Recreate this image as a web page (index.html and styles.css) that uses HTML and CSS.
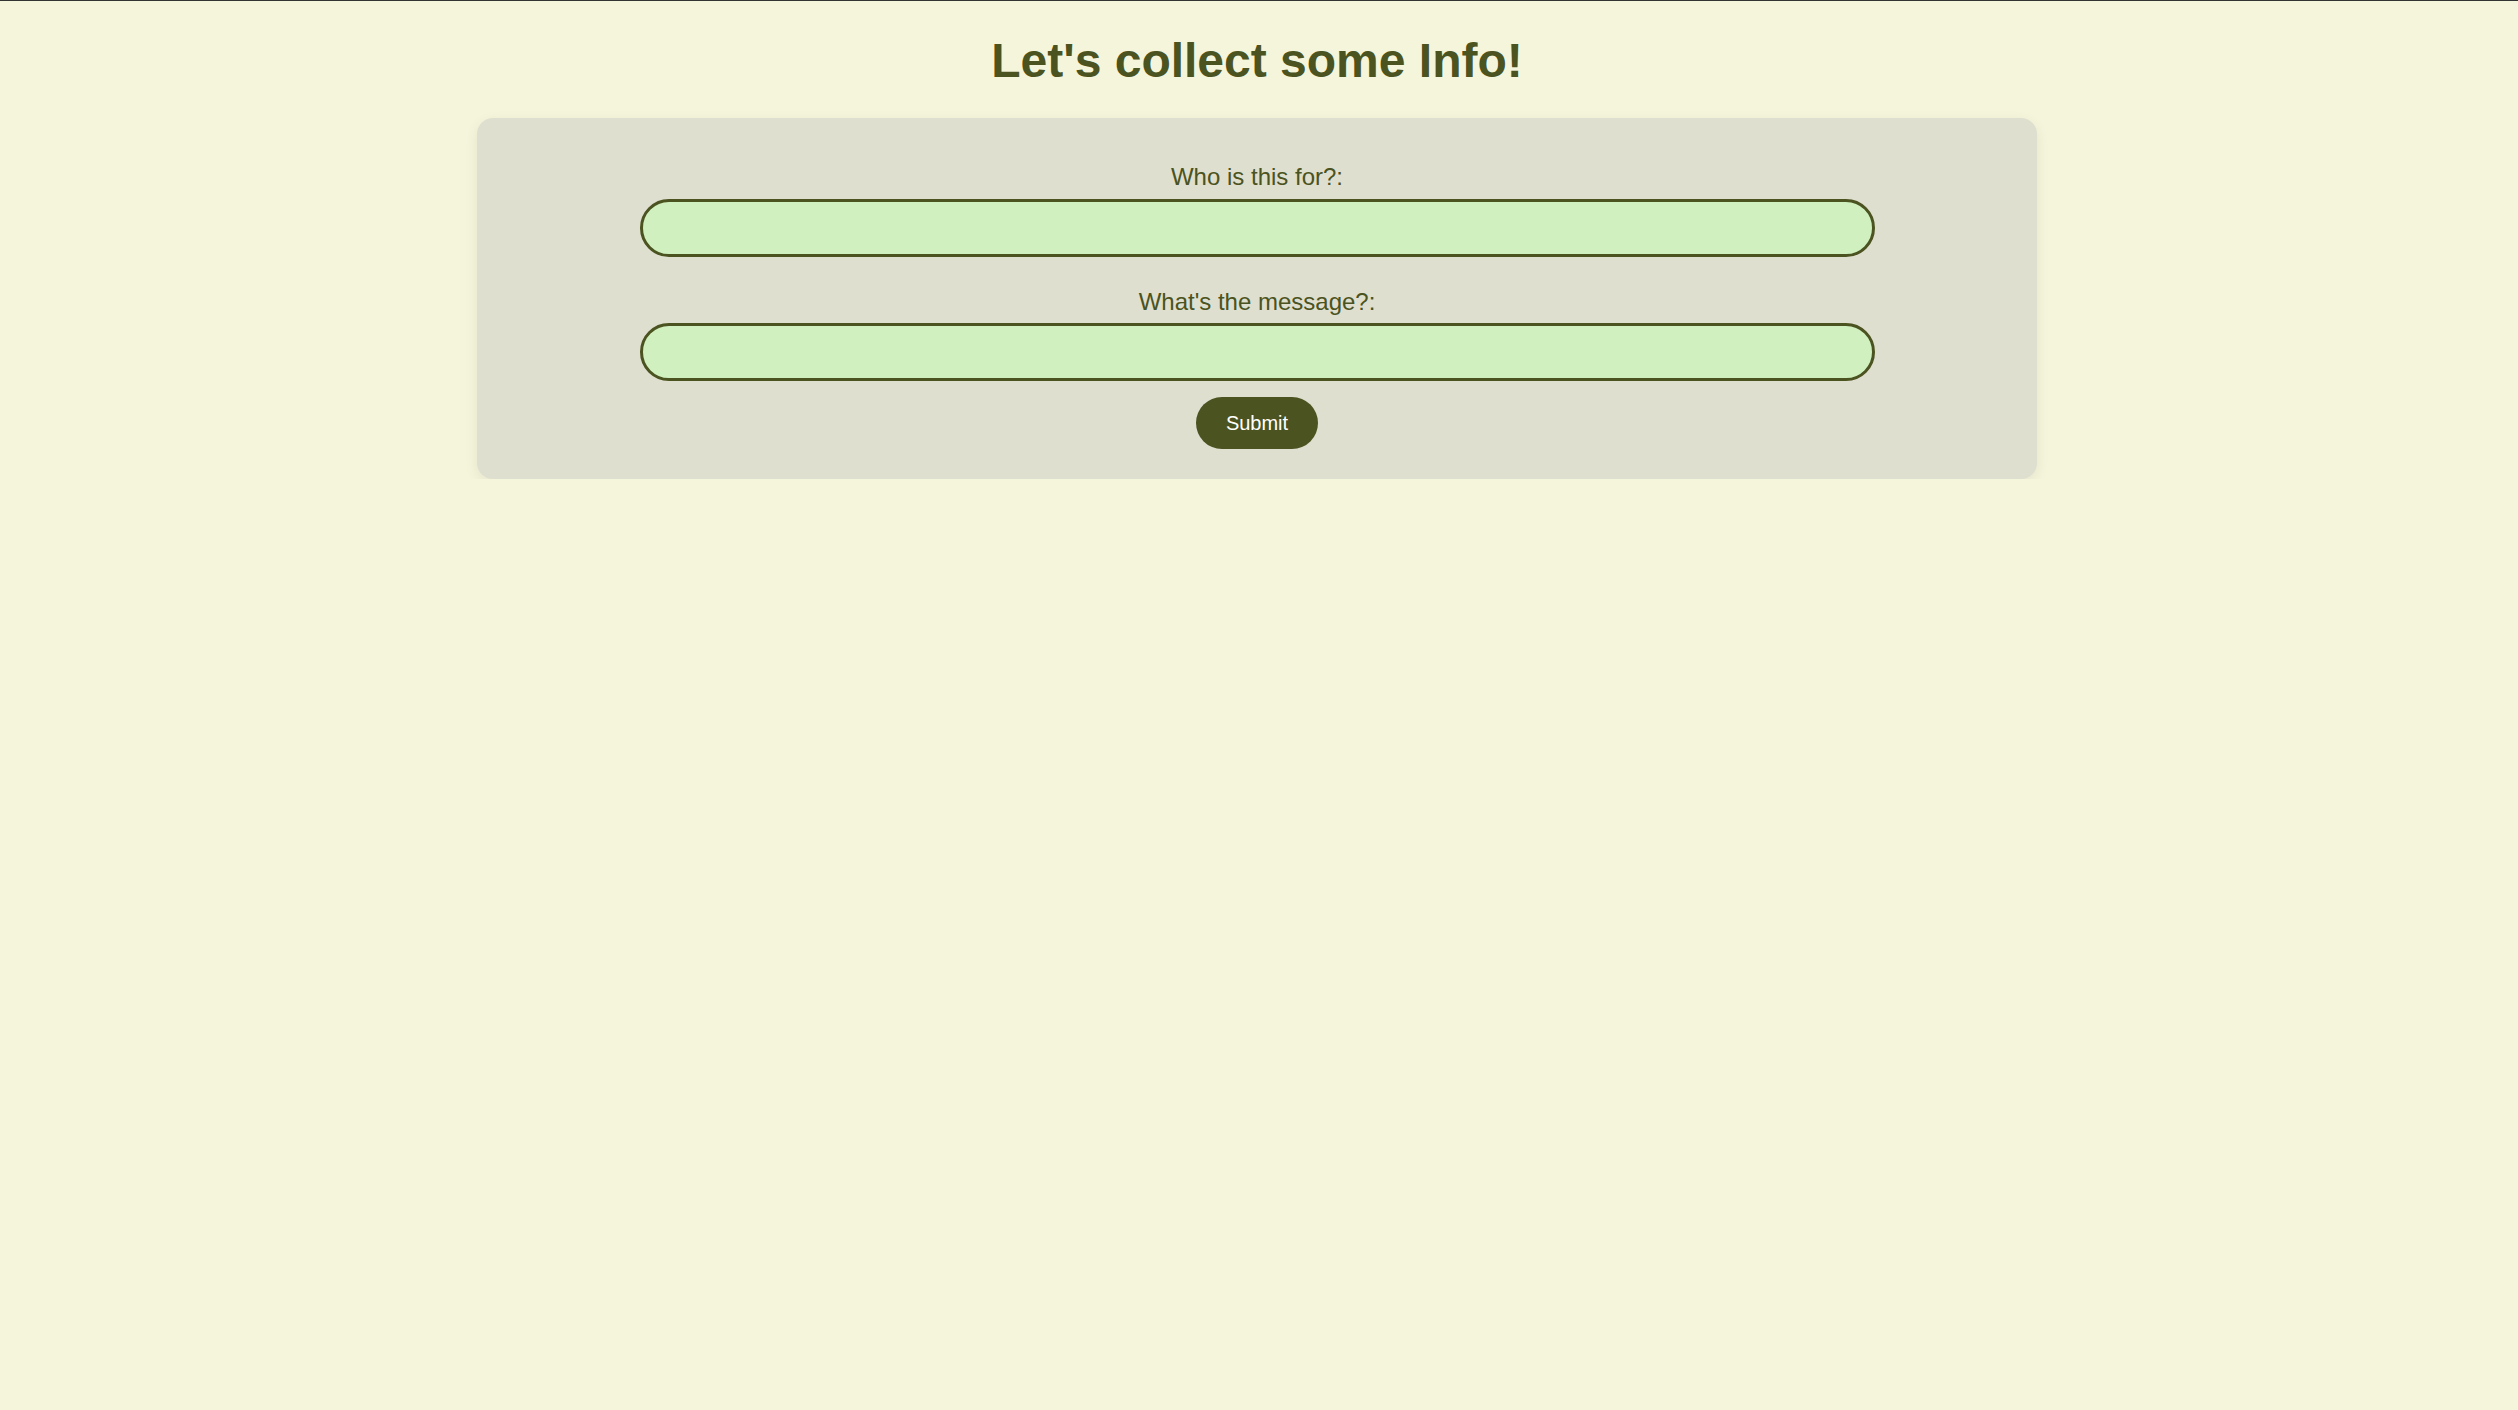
FILE: index.html
```html
<!DOCTYPE html>
<html lang="en">
<head>
<meta charset="utf-8">
<title>Let's collect some Info!</title>
<link rel="stylesheet" href="styles.css">
</head>
<body>
<h1 class="title">Let's collect some Info!</h1>
<form class="card">
  <label class="field-label" for="who">Who is this for?:</label>
  <input class="field-input" id="who" type="text">
  <label class="field-label second" for="msg">What's the message?:</label>
  <input class="field-input" id="msg" type="text">
  <button class="submit" type="button">Submit</button>
</form>
</body>
</html>
```

FILE: styles.css
```css
html {
  border-top: 1px solid #333333;
  background: #f5f5dc;
}
body {
  margin: 0;
  padding-right: 4px;
  background: #f5f5dc;
  font-family: "Liberation Sans", Arial, sans-serif;
  color: #4b5320;
}
.title {
  font-family: "Liberation Sans", Arial, sans-serif;
  font-weight: bold;
  font-size: 48px;
  line-height: 55px;
  text-align: center;
  margin: 32px 0 30px;
  color: #4b5320;
}
.card {
  width: 1560px;
  box-sizing: border-box;
  margin: 0 auto;
  background: #dfdfd0;
  border-radius: 16px;
  box-shadow: 0 4px 14px rgba(0, 0, 0, 0.07);
  padding: 45px 0 30px;
  display: flex;
  flex-direction: column;
  align-items: center;
}
.field-label {
  font-size: 24px;
  line-height: 28px;
  margin-bottom: 8px;
}
.field-label.second {
  margin-top: 31px;
  margin-bottom: 7px;
}
.field-input {
  width: 1235px;
  height: 58px;
  box-sizing: border-box;
  border: 3px solid #4b5320;
  border-radius: 29px;
  background: #d0f0c0;
  padding: 0 20px;
  font-size: 20px;
  font-family: "Liberation Sans", Arial, sans-serif;
  outline: none;
}
.submit {
  margin-top: 16px;
  background: #4b5320;
  color: #ffffff;
  border: none;
  border-radius: 26px;
  font-family: "Liberation Sans", Arial, sans-serif;
  font-size: 20px;
  line-height: 24px;
  padding: 14px 30px;
}
```
